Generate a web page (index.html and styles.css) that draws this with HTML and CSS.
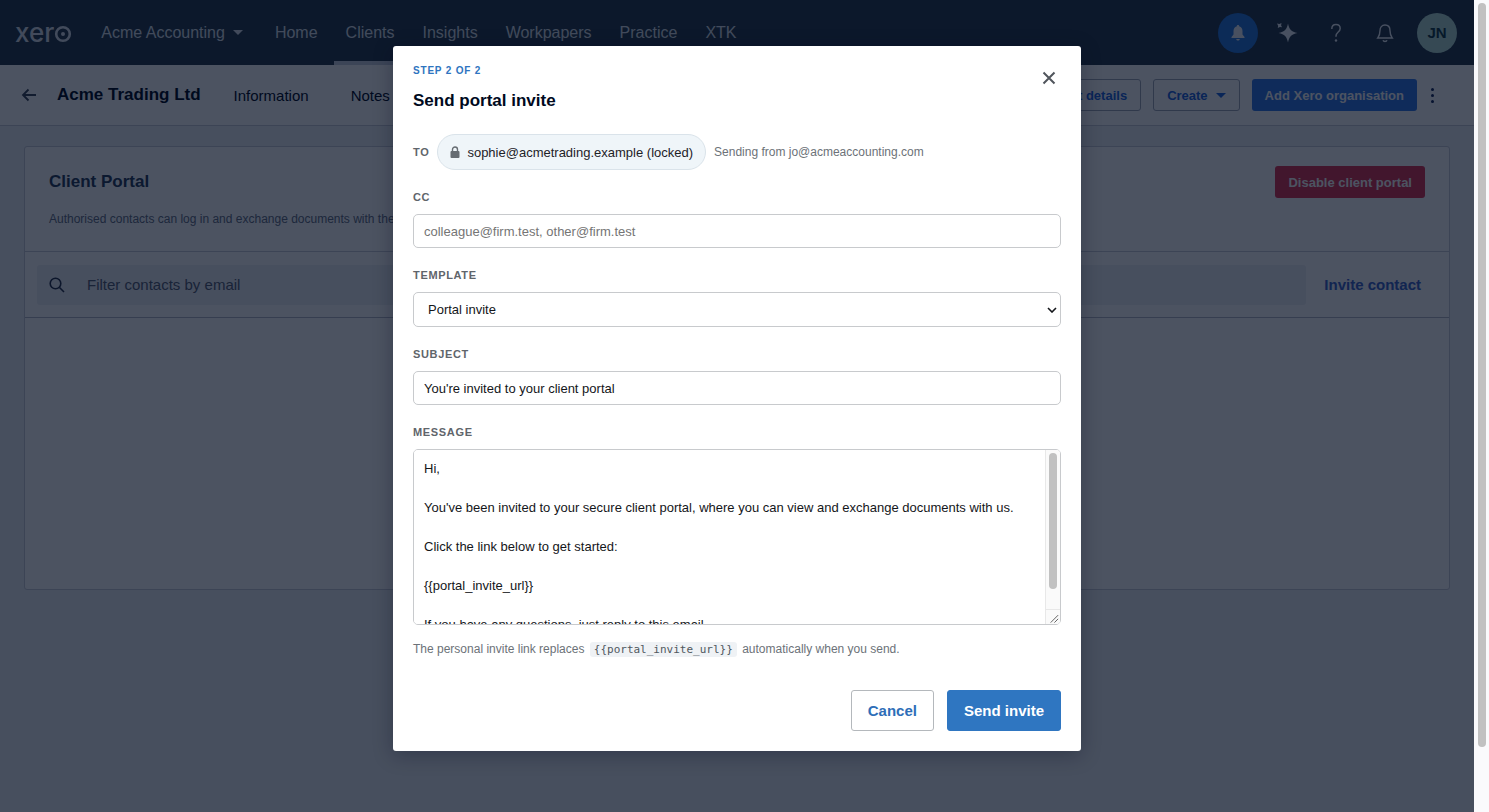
FILE: index.html
```html
<!DOCTYPE html>
<html lang="en">
<head>
  <meta charset="UTF-8" />
  <meta name="viewport" content="width=device-width, initial-scale=1.0" />
  <title>Client Portal - Acme Trading Ltd</title>
  <link rel="stylesheet" href="styles.css">
</head>
<body>
  <div class="app">
    <header class="topbar">
      <a class="logo" href="#">xer<svg width="18" height="18" viewBox="0 0 18 18"><circle cx="9" cy="9" r="6.800" fill="none" stroke="currentColor" stroke-width="2.600"/><circle cx="9" cy="9" r="2" fill="currentColor"/></svg></a>
      <button class="org">Acme Accounting <span class="caret"></span></button>
      <nav class="main-nav">
        <a href="#">Home</a>
        <a href="#" class="active">Clients</a>
        <a href="#">Insights</a>
        <a href="#">Workpapers</a>
        <a href="#">Practice</a>
        <a href="#">XTK</a>
      </nav>
      <div class="top-icons">
        <button class="round round-blue" aria-label="Updates">
          <svg width="18" height="18" viewBox="0 0 18 18" fill="currentColor"><path d="M9 1c.8 0 1.200.5 1.200 1.200C12.400 2.900 13.500 4.800 13.500 7v3.500L15.500 13v1h-13v-1l2-2.500V7c0-2.200 1.100-4.100 3.300-4.800C7.800 1.500 8.200 1 9 1zM7.200 15h3.600c-.2 1-.9 1.500-1.800 1.500S7.400 16 7.200 15z"/></svg>
        </button>
        <button class="round" aria-label="Assistant">
          <svg width="22" height="22" viewBox="0 0 22 22" fill="currentColor"><path d="M12 1.500c1.200 6 3.300 8.300 9.500 9.500-6.200 1.200-8.300 3.500-9.500 9.500-1.200-6-3.300-8.300-9.500-9.500 6.200-1.200 8.300-3.500 9.500-9.500z"/><path d="M1 1.500l2.300.6L5.500 1l-.4 2.400 1 1.800-2.200-.2L1.800 6l.3-2.200z"/></svg>
        </button>
        <button class="round" aria-label="Help">
          <svg width="20" height="20" viewBox="0 0 20 20" fill="none" stroke="currentColor" stroke-width="1.500"><path d="M5.800 6c0-2.700 1.700-4.500 4.200-4.500S14.200 3.200 14.200 5.500c0 3.500-4.200 3.500-4.200 7.500v.8"/><circle cx="10" cy="17.500" r="1.200" fill="currentColor" stroke="none"/></svg>
        </button>
        <button class="round" aria-label="Notifications">
          <svg width="20" height="20" viewBox="0 0 20 20" fill="none" stroke="currentColor" stroke-width="1.400"><path d="M10 2c3.200 0 5 2.400 5 5.500 0 4.500 1 5.700 2.300 7.500H2.700C4 13.200 5 12 5 7.500 5 4.400 6.800 2 10 2zM8 17.200c.3.900 1 1.300 2 1.300s1.700-.4 2-1.300"/></svg>
        </button>
        <button class="round avatar">JN</button>
      </div>
    </header>

    <div class="client-bar">
      <a class="back" href="#" aria-label="Back">
        <svg width="16" height="14" viewBox="0 0 16 14" fill="none" stroke="currentColor" stroke-width="1.800"><path d="M15 7H2M7.500 1.500L2 7l5.500 5.500"/></svg>
      </a>
      <h1>Acme Trading Ltd</h1>
      <nav class="tabs">
        <a href="#">Information</a>
        <a href="#">Notes</a>
      </nav>
      <div class="client-actions">
        <button class="btn-outline">Edit details</button>
        <button class="btn-outline">Create <span class="caret"></span></button>
        <button class="btn-blue">Add Xero organisation</button>
        <button class="more" aria-label="More"><i></i><i></i><i></i></button>
      </div>
    </div>

    <main class="card">
      <section class="card-head">
        <div>
          <h2>Client Portal</h2>
          <p>Authorised contacts can log in and exchange documents with the practice.</p>
        </div>
        <button class="btn-red">Disable client portal</button>
      </section>
      <section class="card-filter">
        <label class="filter">
          <svg width="16" height="16" viewBox="0 0 16 16" fill="none" stroke="currentColor" stroke-width="1.600"><circle cx="6.500" cy="6.500" r="5.300"/><path d="M10.500 10.500L15 15"/></svg>
          <input type="text" placeholder="Filter contacts by email" aria-label="Filter contacts by email">
        </label>
        <a class="invite-link" href="#">Invite contact</a>
      </section>
      <section class="card-body"></section>
    </main>

    <div class="backdrop">
      <form class="modal" role="dialog" aria-labelledby="modalTitle">
        <div class="modal-head">
          <div>
            <div class="step">STEP 2 OF 2</div>
            <h3 id="modalTitle">Send portal invite</h3>
          </div>
          <button type="button" class="close" aria-label="Close">
            <svg width="14" height="14" viewBox="0 0 14 14" fill="none" stroke="currentColor" stroke-width="2"><path d="M1.500 1.500l11 11M12.500 1.500l-11 11"/></svg>
          </button>
        </div>

        <div class="to-row">
          <span class="label">TO</span>
          <span class="chip">
            <svg width="10" height="12" viewBox="0 0 10 12"><path d="M2.500 6V3.500a2.500 2.500 0 0 1 5 0V6" fill="none" stroke="currentColor" stroke-width="1.400"/><rect x="0.500" y="5" width="9" height="7" rx="1" fill="currentColor"/></svg>
            sophie@acmetrading.example (locked)
          </span>
          <span class="from">Sending from jo@acmeaccounting.com</span>
        </div>

        <div class="field">
          <label class="label" for="cc">CC</label>
          <input id="cc" class="control" type="text" placeholder="colleague@firm.test, other@firm.test">
        </div>
        <div class="field">
          <label class="label" for="template">TEMPLATE</label>
          <div class="select-box">
            <select id="template" class="control">
              <option>Portal invite</option>
            </select>
            <svg class="chevron" width="10" height="6" viewBox="0 0 10 6" fill="none" stroke="#14161a" stroke-width="1.600"><path d="M1 1l4 4 4-4"/></svg>
          </div>
        </div>
        <div class="field">
          <label class="label" for="subject">SUBJECT</label>
          <input id="subject" class="control" type="text" value="You're invited to your client portal">
        </div>
        <div class="field">
          <label class="label" for="message">MESSAGE</label>
          <div class="message-box">
            <textarea id="message" class="control">Hi,

You've been invited to your secure client portal, where you can view and exchange documents with us.

Click the link below to get started:

{{portal_invite_url}}

If you have any questions, just reply to this email.

Thanks</textarea>
            <div class="message-scroll">
              <div class="message-thumb"></div>
              <svg class="grip" width="14" height="15" viewBox="0 0 14 15" stroke="#5a5a5a" fill="none"><path d="M4.500 13.500l8-8M8.500 13.500l4-4"/></svg>
            </div>
          </div>
        </div>
        <p class="hint">The personal invite link replaces <code>{{portal_invite_url}}</code> automatically when you send.</p>

        <div class="modal-foot">
          <button type="button" class="cancel">Cancel</button>
          <button type="submit" class="send">Send invite</button>
        </div>
      </form>
    </div>
  </div>
  <div class="page-scroll"><div class="page-thumb"></div></div>
</body>
</html>
```

FILE: styles.css
```css
* {
  box-sizing: border-box;
}
body {
  margin: 0;
  display: flex;
  height: 100vh;
  overflow: hidden;
  font-family: "Liberation Sans", Arial, sans-serif;
  font-size: 13px;
  color: #000a1e;
}
button, input, select, textarea {
  font-family: inherit;
}
button {
  cursor: pointer;
}
a {
  color: inherit;
  text-decoration: none;
}
h1, h2, h3, p {
  margin: 0;
}
.app {
  flex: 1;
  position: relative;
  background: #eff1f5;
}

/* top bar */
.topbar {
  display: flex;
  align-items: center;
  height: 65px;
  padding: 0 17px 0 15px;
  background: #28394a;
  color: #dce2ea;
  font-size: 16px;
}
.logo {
  display: flex;
  align-items: center;
  font-family: Inter, sans-serif;
  font-size: 26px;
  font-weight: 500;
  line-height: 32px;
}
.logo svg {
  margin-top: 3px;
}
.org {
  display: flex;
  align-items: center;
  gap: 8px;
  margin-left: 21px;
  padding: 8px;
  border: none;
  background: none;
  color: inherit;
  font-size: 16px;
}
.caret {
  border: 5px solid transparent;
  border-top-color: currentColor;
  border-bottom: none;
}
.main-nav {
  display: flex;
  align-self: stretch;
  gap: 4px;
  margin-left: 12px;
}
.main-nav a {
  display: flex;
  align-items: center;
  padding: 4px 12px 0;
  border-bottom: 4px solid transparent;
}
.main-nav .active {
  border-bottom-color: #c8d0dc;
}
.top-icons {
  display: flex;
  gap: 9px;
  margin-left: auto;
}
.round {
  display: flex;
  align-items: center;
  justify-content: center;
  width: 40px;
  height: 40px;
  padding: 0;
  border: none;
  border-radius: 50%;
  background: none;
  color: #f0f4fa;
}
.round-blue {
  background: #2878dc;
}
.avatar {
  margin-left: 3px;
  background: #b4dcd2;
  color: #143c46;
  font-size: 15px;
  font-weight: bold;
}

/* client bar */
.client-bar {
  display: flex;
  align-items: center;
  height: 61px;
  padding: 0 38px 0 21px;
  background: #fff;
  border-bottom: 1px solid #c8ccd6;
}
.back {
  display: flex;
  color: #3c4658;
}
h1 {
  margin-left: 20px;
  font-size: 17px;
  line-height: 24px;
}
.tabs {
  display: flex;
  gap: 42px;
  margin-left: 33px;
  font-size: 15px;
}
.client-actions {
  display: flex;
  align-items: center;
  gap: 12px;
  margin-left: auto;
}
.btn-outline, .btn-blue, .btn-red {
  display: flex;
  align-items: center;
  gap: 8px;
  height: 32px;
  padding: 0 13px;
  border: 1px solid #a0a8b6;
  border-radius: 3px;
  background: none;
  color: #1e64dc;
  font-size: 13px;
  font-weight: bold;
}
.btn-blue {
  border: none;
  background: #3278e6;
  color: #fff;
}
.btn-red {
  border: none;
  background: #dc3250;
  color: #fff;
}
.more {
  display: flex;
  flex-direction: column;
  gap: 3px;
  padding: 2px;
  border: none;
  background: none;
}
.more i {
  width: 3px;
  height: 3px;
  border-radius: 50%;
  background: #14285a;
}

/* portal card */
.card {
  margin: 20px 24px;
  background: #fff;
  border: 1px solid #c8ccd6;
  border-radius: 3px;
}
.card-head {
  display: flex;
  justify-content: space-between;
  align-items: flex-start;
  height: 105px;
  padding: 19px 24px;
  border-bottom: 1px solid #c8ccd6;
}
h2 {
  color: #283c5a;
  font-size: 17px;
  line-height: 32px;
}
.card-head p {
  margin-top: 11px;
  color: #646e82;
  font-size: 12px;
  line-height: 20px;
}
.card-filter {
  display: flex;
  align-items: center;
  height: 66px;
  padding: 0 28px 0 12px;
  border-bottom: 1px solid #b4bac6;
}
.filter {
  display: flex;
  flex: 1;
  align-items: center;
  gap: 20px;
  height: 40px;
  padding: 0 12px;
  border-radius: 3px;
  background: #eff1f5;
  color: #28324b;
}
.filter input {
  flex: 1;
  border: none;
  background: none;
  font-size: 15px;
}
.filter input::placeholder {
  color: #566074;
}
.invite-link {
  margin-left: 18px;
  color: #3c64c8;
  font-size: 15px;
  font-weight: bold;
}
.card-body {
  height: 271px;
}

/* dialog */
.backdrop {
  position: absolute;
  inset: 0;
  display: flex;
  align-items: flex-start;
  justify-content: center;
  padding-top: 46px;
  background: rgba(0, 10, 30, 0.7);
}
.modal {
  width: 688px;
  padding: 17px 20px 20px;
  border-radius: 3px;
  background: #fff;
  box-shadow: 0 4px 20px rgba(0, 10, 30, 0.3);
}
.modal-head {
  display: flex;
  justify-content: space-between;
  margin-bottom: 21px;
}
.step {
  color: #2e74c0;
  font-size: 10px;
  font-weight: bold;
  line-height: 16px;
  letter-spacing: 0.08em;
}
h3 {
  margin-top: 10px;
  font-size: 17px;
  line-height: 24px;
}
.close {
  display: flex;
  align-self: flex-start;
  margin-top: 3px;
  padding: 5px;
  border: none;
  background: none;
  color: #50555c;
}
.label {
  color: #5f656b;
  font-size: 11px;
  font-weight: bold;
  line-height: 16px;
  letter-spacing: 0.06em;
}
.to-row {
  display: flex;
  align-items: center;
  gap: 8px;
}
.chip {
  display: flex;
  align-items: center;
  gap: 7px;
  height: 36px;
  padding: 0 12px;
  border: 1px solid #dae3ea;
  border-radius: 18px;
  background: #eff5f9;
  color: #1e2228;
  font-size: 13px;
}
.chip svg {
  color: #666c72;
}
.from {
  color: #6c7278;
  font-size: 12px;
}
.field {
  display: flex;
  flex-direction: column;
  gap: 9px;
  margin-top: 19px;
}
.control {
  width: 100%;
  height: 34px;
  padding: 0 10px;
  border: 1px solid #c8cacd;
  border-radius: 5px;
  background: #fff;
  color: #14161a;
  font-size: 13px;
}
.control::placeholder {
  color: #757575;
}
.select-box, .message-box {
  position: relative;
}
select.control {
  display: block;
  height: 35px;
  padding: 0 14px;
  appearance: none;
}
.chevron {
  position: absolute;
  top: 15px;
  right: 4px;
  pointer-events: none;
}
textarea.control {
  display: block;
  height: 176px;
  padding: 9px 26px 8px 10px;
  line-height: 1.5;
  resize: none;
  overflow-y: scroll;
  scrollbar-width: none;
}
.message-scroll {
  position: absolute;
  top: 1px;
  right: 1px;
  bottom: 1px;
  display: flex;
  flex-direction: column;
  justify-content: space-between;
  width: 15px;
  border-left: 1px solid #e8e8e8;
  border-radius: 0 4px 4px 0;
  background: #fafafa;
  pointer-events: none;
}
.message-thumb {
  width: 8px;
  height: 78%;
  margin: 3px;
  border-radius: 4px;
  background: #c1c1c1;
}
.grip {
  border-top: 1px solid #e8e8e8;
}
.hint {
  margin-top: 16px;
  color: #6c7278;
  font-size: 12px;
  line-height: 16px;
}
.hint code {
  margin: 0 2px;
  padding: 1px 4px;
  border-radius: 3px;
  background: #eff2f5;
  color: #50585f;
  font-family: "DejaVu Sans Mono", monospace;
  font-size: 11px;
}
.modal-foot {
  display: flex;
  justify-content: flex-end;
  gap: 13px;
  margin-top: 32px;
}
.cancel, .send {
  height: 41px;
  padding: 0 16px;
  border: 1px solid #2f76c1;
  border-radius: 3px;
  background: #2f76c1;
  color: #fff;
  font-size: 15px;
  font-weight: bold;
}
.cancel {
  border-color: #b4b8bc;
  background: #fff;
  color: #2e6eb8;
}

/* page scroll track */
.page-scroll {
  width: 15px;
  padding: 3px 3px 0 4px;
  background: #fafafc;
}
.page-thumb {
  height: 92%;
  border-radius: 4px;
  background: #c1c1c1;
}
```
